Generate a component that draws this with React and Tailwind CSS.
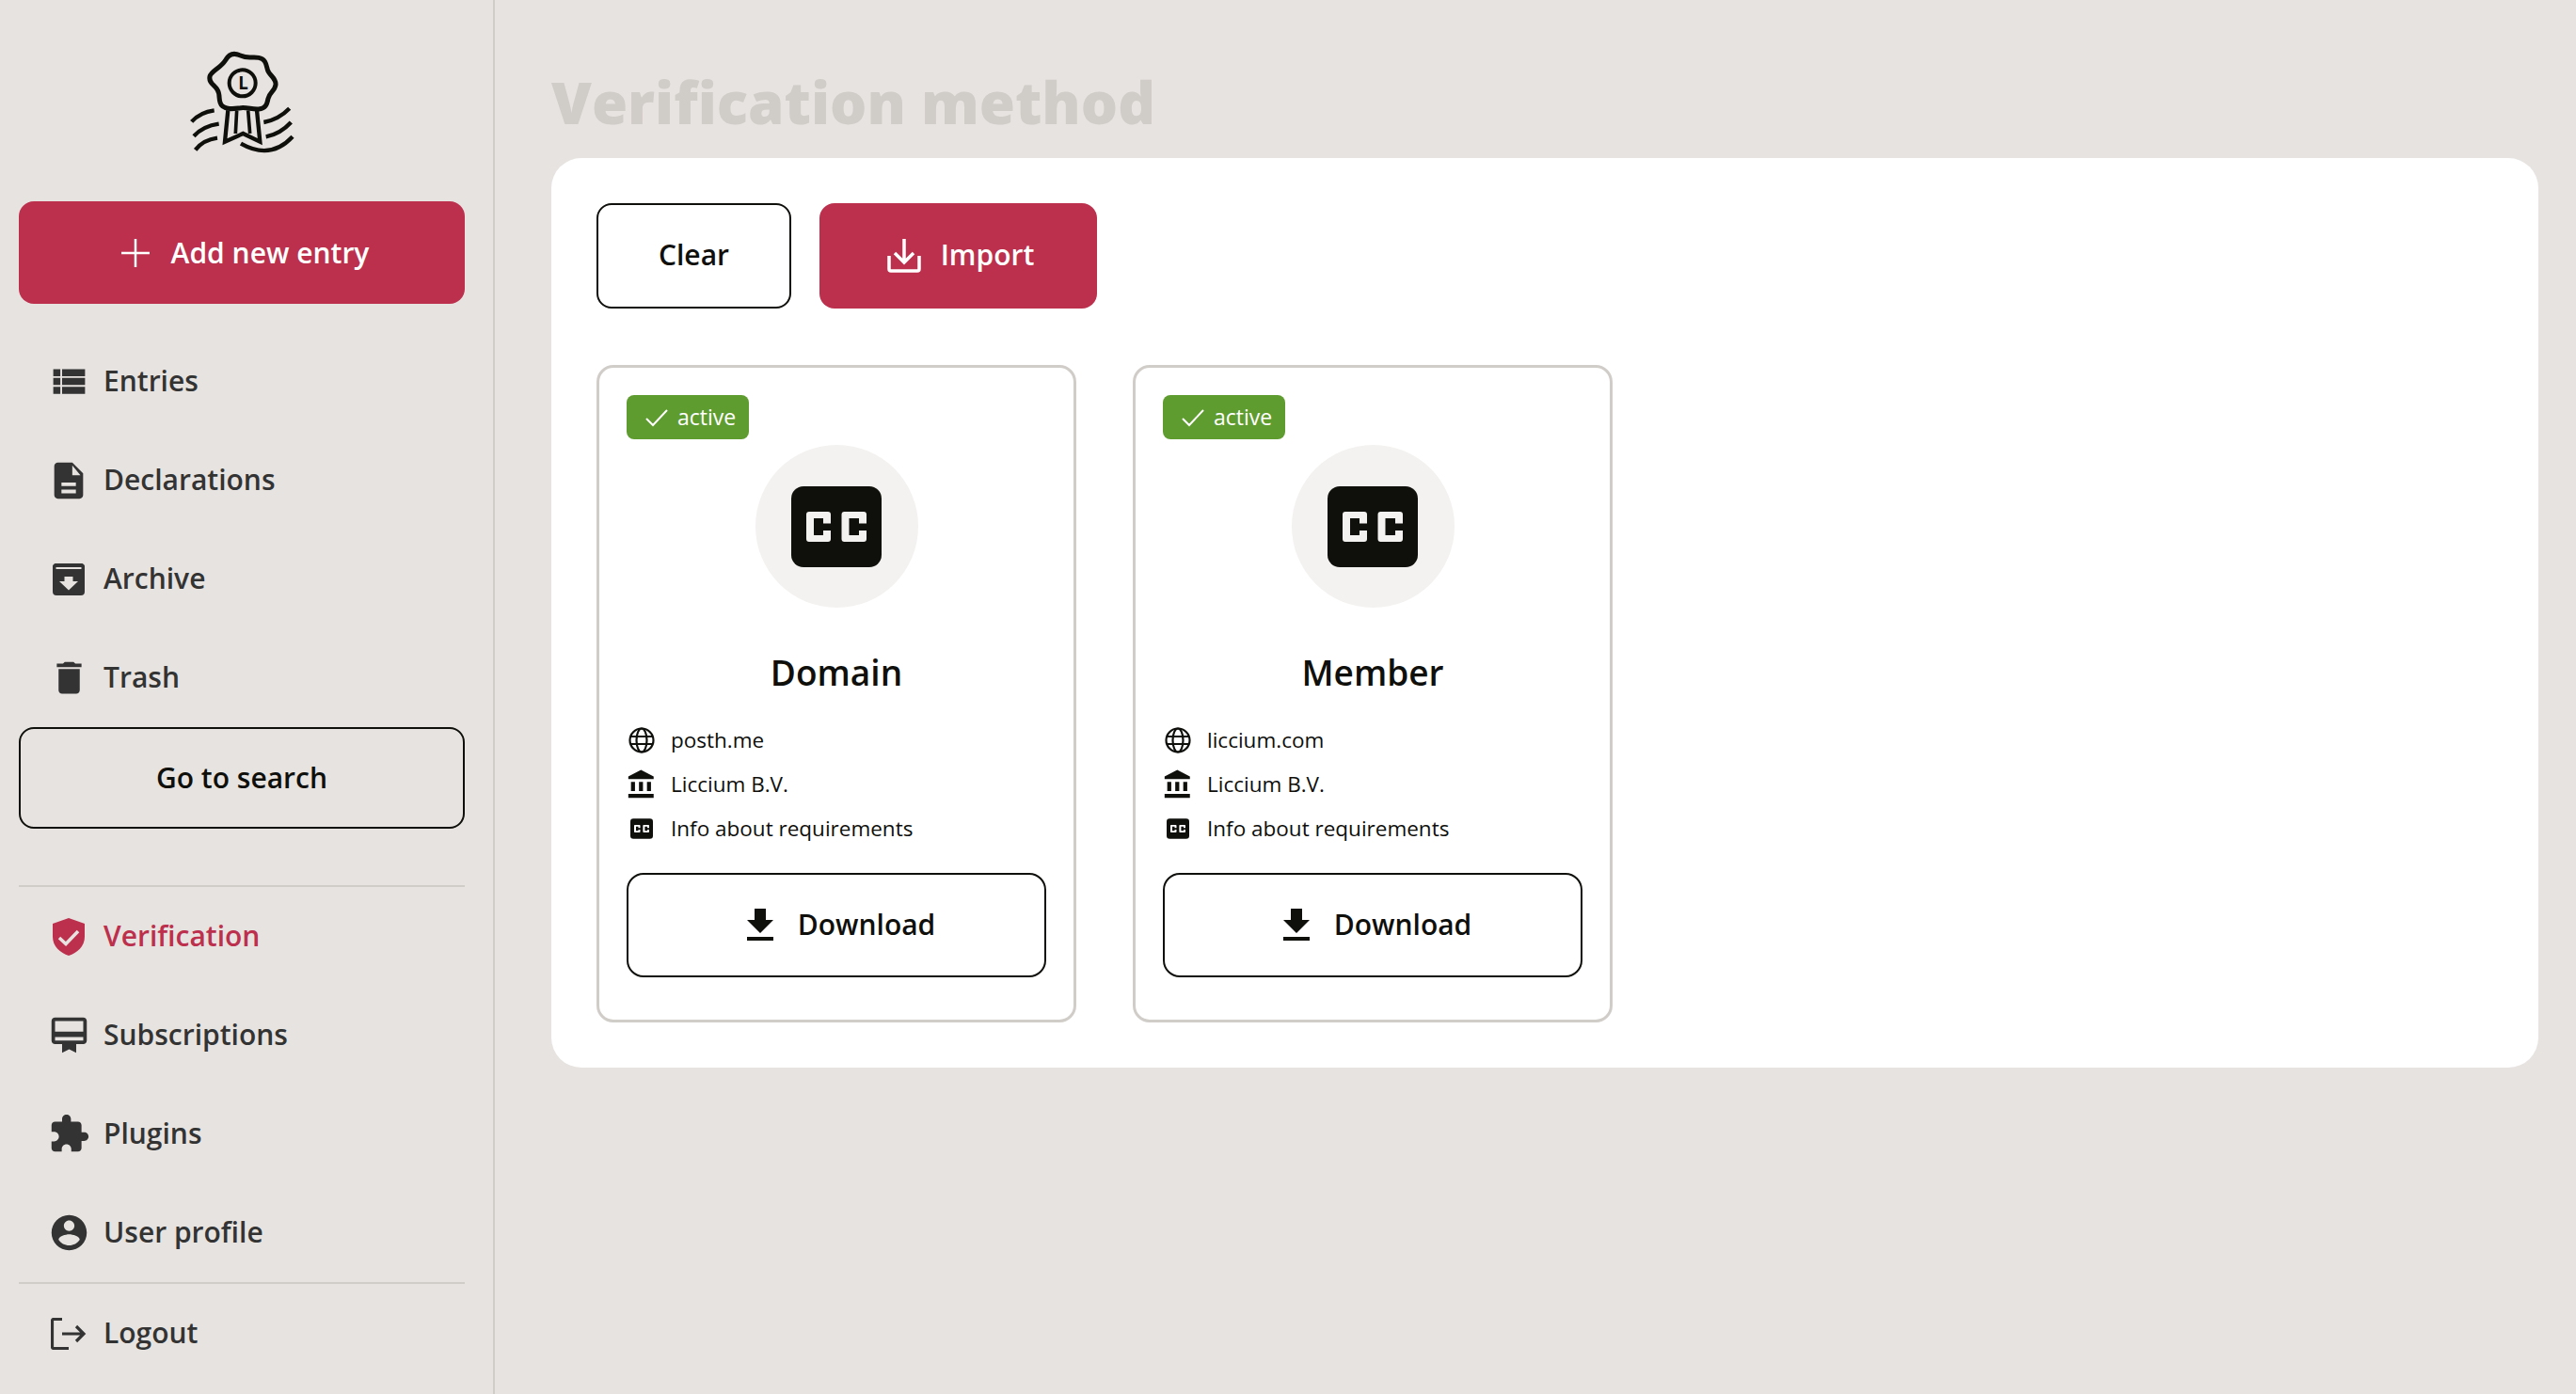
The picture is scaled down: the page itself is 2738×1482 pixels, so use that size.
import React from "react";

const Mat = ({ d, className }) => (
  <svg viewBox="0 0 24 24" fill="currentColor" fillRule="evenodd" className={`shrink-0 ${className}`}>
    <path d={d} />
  </svg>
);

const Logo = () => (
  <svg viewBox="0 0 450 420" className="w-[150px] h-[140px]" fill="none" stroke="#0f0f0c" strokeWidth="15">
    <path d="M176 72C188 50 206 48 226 58C246 68 262 60 282 64C304 68 306 86 310 102C314 120 338 128 336 150C334 170 316 174 312 194C308 214 304 226 282 228C262 230 246 222 226 224C206 226 184 232 166 218C150 204 162 184 150 166C140 150 122 144 126 124C130 106 160 98 176 72Z" />
    <circle cx="230" cy="145" r="42" strokeWidth="12" />
    <text x="217" y="166" fontFamily="'Open Sans', sans-serif" fontWeight="700" fontSize="56" fill="#0f0f0c" stroke="none">L</text>
    <path d="M184 232L174 332L232 306L286 332L276 232" strokeWidth="13" />
    <path d="M212 232L208 306M248 232L254 306" strokeWidth="11" />
    <path d="M68 268Q95 238 140 232M75 314Q105 282 155 275M80 358Q105 326 150 320M298 270Q345 262 380 226M305 316Q350 308 385 270M225 338Q320 392 390 316" strokeWidth="13" />
  </svg>
);

const GlobeIcon = ({ className }) => (
  <svg viewBox="0 0 28 28" fill="none" stroke="currentColor" strokeWidth="2.200" className={className}>
    <circle cx="14" cy="14" r="12.500" />
    <ellipse cx="14" cy="14" rx="5.500" ry="12.500" />
    <path d="M2.500 10h23M2.500 18h23" />
  </svg>
);

const CcIcon = ({ className, fill = "#f3f2f0" }) => (
  <svg viewBox="0 0 96 86" className={className}>
    <rect width="96" height="86" rx="13" fill="#0f0f0c" />
    <path
      fill={fill}
      fillRule="evenodd"
      d="M19 27H39A3 3 0 0 1 42 30V39.500H34V34H24V52H34V47H42V56A3 3 0 0 1 39 59H19A3 3 0 0 1 16 56V30A3 3 0 0 1 19 27ZM56.500 27H77A3 3 0 0 1 80 30V39.500H72V34H61.500V52H72V47H80V56A3 3 0 0 1 77 59H56.500A3 3 0 0 1 53.500 56V30A3 3 0 0 1 56.500 27Z"
    />
  </svg>
);

const ArchiveIcon = ({ className }) => (
  <svg viewBox="0 0 34 34" className={`shrink-0 ${className}`}>
    <path fill="currentColor" d="M5 0H29A4 4 0 0 1 34 5V30A4 4 0 0 1 30 34H4A4 4 0 0 1 0 30V5A4 4 0 0 1 5 0Z" />
    <path fill="#e7e3e0" d="M3.500 4H30.500V6H3.500ZM12.500 14H21.500V19H27L17 28.500L7 19H12.500Z" />
  </svg>
);

const ShieldIcon = ({ className }) => (
  <svg viewBox="0 0 34 40" className={`shrink-0 ${className}`}>
    <path fill="currentColor" d="M17 0L34 6V20C34 30 26 37 17 40C8 37 0 30 0 20V6Z" />
    <path fill="none" stroke="#e7e3e0" strokeWidth="3.500" d="M7 21L14 27.500L27 14" />
  </svg>
);

const LogoutIcon = ({ className }) => (
  <svg viewBox="0 0 38 34" fill="none" stroke="currentColor" strokeWidth="3.200" className={`shrink-0 ${className}`}>
    <path d="M12 1.500H3A1.500 1.500 0 0 0 1.500 3V31A1.500 1.500 0 0 0 3 32.500H19" />
    <path d="M12 17H35M27 9L35 17L27 25" />
  </svg>
);

const paths = {
  list: "M3 14h4v-4H3v4zm0 5h4v-4H3v4zM3 9h4V5H3v4zm5 5h13v-4H8v4zm0 5h13v-4H8v4zM8 5v4h13V5H8z",
  doc: "M14 2H6c-1.100 0-2 .9-2 2v16c0 1.100.9 2 2 2h12c1.100 0 2-.9 2-2V8l-6-6zm2 17H8v-2h8v2zm0-4H8v-2h8v2zm-2-6V3.500L18.500 9H14z",
  trash: "M6 19c0 1.100.9 2 2 2h8c1.100 0 2-.9 2-2V7H6v12zM19 4h-3.500l-1-1h-5l-1 1H5v2h14V4z",
  card: "M20 2H4c-1.110 0-2 .89-2 2v11c0 1.110.89 2 2 2h4v5l4-2 4 2v-5h4c1.110 0 2-.89 2-2V4c0-1.110-.89-2-2-2zm0 13H4v-2h16v2zm0-5H4V4h16v6z",
  puzzle: "M20.500 11H19V7c0-1.100-.9-2-2-2h-4V3.500C13 2.120 11.880 1 10.500 1S8 2.120 8 3.500V5H4c-1.100 0-1.990.9-1.990 2v3.800H3.500c1.490 0 2.700 1.210 2.700 2.700s-1.210 2.700-2.700 2.700H2V20c0 1.100.9 2 2 2h3.800v-1.500c0-1.490 1.210-2.700 2.700-2.700 1.490 0 2.700 1.210 2.700 2.700V22H17c1.100 0 2-.9 2-2v-4h1.500c1.380 0 2.500-1.120 2.500-2.500S21.880 11 20.500 11z",
  user: "M12 2C6.480 2 2 6.480 2 12s4.480 10 10 10 10-4.480 10-10S17.520 2 12 2zm0 3c1.660 0 3 1.340 3 3s-1.340 3-3 3-3-1.340-3-3 1.340-3 3-3zm0 14.200c-2.500 0-4.710-1.280-6-3.220.03-1.990 4-3.080 6-3.080 1.990 0 5.970 1.090 6 3.080-1.290 1.940-3.500 3.220-6 3.220z",
  bank: "M4 10v7h3v-7H4zm6 0v7h3v-7h-3zM2 22h19v-3H2v3zm14-12v7h3v-7h-3zm-4.500-9L2 6v2h19V6l-9.500-5z",
  download: "M19 9h-4V3H9v6H5l7 7 7-7zM5 18v2h14v-2H5z",
};

const NavItem = ({ icon, label, active }) => (
  <div className={`h-[105px] flex items-center text-[30px] font-semibold ${active ? "text-[#bc304d]" : "text-[#333333]"}`}>
    <div className="w-[90px] pl-[30px] pr-[14px] shrink-0 flex items-center justify-center">{icon}</div>
    <span className="pb-[2px]">{label}</span>
  </div>
);

const InfoRow = ({ icon, children }) => (
  <div className="h-[47px] flex items-center gap-[17px] pl-[2px] text-[22.500px] text-[#0f0f0c]">
    <div className="w-[28px] flex justify-center shrink-0">{icon}</div>
    <span>{children}</span>
  </div>
);

const MethodCard = ({ title, domain }) => (
  <div className="w-[510px] h-[699px] border-[3px] border-[#d0ccc8] rounded-[18px] px-[29px] pt-[29px]">
    <div className="w-[130px] h-[47px] bg-[#5f9c2f] rounded-[8px] flex items-center pl-[20px] gap-[10px] text-white text-[23px]">
      <svg viewBox="0 0 24 24" fill="none" stroke="currentColor" strokeWidth="2" className="w-[24px] h-[24px]">
        <path d="M1 13L8 20L23 4" />
      </svg>
      <span className="pb-[1px]">active</span>
    </div>
    <div className="flex justify-center mt-[6px]">
      <div className="w-[173px] h-[173px] rounded-full bg-[#f3f2f0] flex items-center justify-center">
        <CcIcon className="w-[96px] h-[86px]" />
      </div>
    </div>
    <h2 className="text-center text-[37px] font-semibold text-[#0f0f0c] mt-[43px] leading-[52px]">{title}</h2>
    <div className="mt-[22px]">
      <InfoRow icon={<GlobeIcon className="w-[28px] h-[28px]" />}>{domain}</InfoRow>
      <InfoRow icon={<Mat d={paths.bank} className="w-[34px] h-[34px]" />}>Liccium B.V.</InfoRow>
      <InfoRow icon={<CcIcon fill="#ffffff" className="w-[24px] h-[22px]" />}>Info about requirements</InfoRow>
    </div>
    <button className="mt-[24px] w-full h-[111px] border-2 border-[#0f0f0c] rounded-[18px] flex items-center justify-center gap-[16px] text-[30px] font-semibold text-[#0f0f0c]">
      <Mat d={paths.download} className="w-[48px] h-[48px]" />
      <span className="pb-[2px]">Download</span>
    </button>
  </div>
);

const App = () => {
  return (
    <div className="flex h-screen bg-[#e7e3e0] font-['Open_Sans',sans-serif] overflow-hidden">
      <aside className="w-[526px] shrink-0 border-r-2 border-[#d0ccc8] pl-[20px] pr-[30px]">
        <div className="h-[214px] pt-[40px] pr-[3px] flex justify-center">
          <Logo />
        </div>
        <button className="w-full h-[109px] bg-[#bc304d] rounded-[16px] text-white text-[30px] font-semibold flex items-center justify-center gap-[23px] pl-[7px]">
          <svg viewBox="0 0 30 30" fill="none" stroke="currentColor" strokeWidth="2.500" className="w-[30px] h-[30px]">
            <path d="M15 0V30M0 15H30" />
          </svg>
          <span className="pb-[1px]">Add new entry</span>
        </button>
        <nav className="mt-[30px]">
          <NavItem icon={<Mat d={paths.list} className="w-[45px] h-[45px]" />} label="Entries" />
          <NavItem icon={<Mat d={paths.doc} className="w-[46px] h-[46px]" />} label="Declarations" />
          <NavItem icon={<ArchiveIcon className="w-[34px] h-[34px]" />} label="Archive" />
          <NavItem icon={<Mat d={paths.trash} className="w-[45px] h-[45px]" />} label="Trash" />
        </nav>
        <button className="w-full h-[108px] border-2 border-[#0f0f0c] rounded-[16px] pb-[2px] text-[30px] font-semibold text-[#0f0f0c]">
          Go to search
        </button>
        <div className="mt-[60px] border-t-2 border-[#d0ccc8]">
          <NavItem active icon={<ShieldIcon className="w-[34px] h-[40px]" />} label="Verification" />
          <NavItem icon={<Mat d={paths.card} className="w-[45px] h-[45px]" />} label="Subscriptions" />
          <NavItem icon={<Mat d={paths.puzzle} className="w-[45px] h-[45px]" />} label="Plugins" />
          <NavItem icon={<Mat d={paths.user} className="w-[45px] h-[45px]" />} label="User profile" />
        </div>
        <div className="border-t-2 border-[#d0ccc8]">
          <NavItem icon={<LogoutIcon className="w-[38px] h-[34px]" />} label="Logout" />
        </div>
      </aside>
      <main className="flex-1 pl-[60px] pr-[40px]">
        <h1 className="h-[168px] pt-[62px] text-[61.800px] leading-[92px] font-extrabold text-[#d0ccc8]">Verification method</h1>
        <section className="bg-white rounded-[32px] h-[967px] p-[48px]">
          <div className="flex gap-[30px]">
            <button className="w-[207px] h-[112px] border-2 border-[#0f0f0c] rounded-[16px] pb-[3px] text-[30px] font-semibold text-[#0f0f0c]">
              Clear
            </button>
            <button className="w-[295px] h-[112px] bg-[#bc304d] rounded-[16px] text-white text-[30px] font-semibold flex items-center justify-center gap-[21px] pl-[5px]">
              <svg viewBox="0 0 36 36" fill="none" stroke="currentColor" strokeWidth="3.500" className="w-[36px] h-[36px]">
                <path d="M2 18V32A2 2 0 0 0 4 34H32A2 2 0 0 0 34 32V18M18 0V25M8 15L18 25L28 15" />
              </svg>
              <span className="pb-[3px]">Import</span>
            </button>
          </div>
          <div className="flex gap-[60px] mt-[60px]">
            <MethodCard title="Domain" domain="posth.me" />
            <MethodCard title="Member" domain="liccium.com" />
          </div>
        </section>
      </main>
    </div>
  );
};

export default App;
